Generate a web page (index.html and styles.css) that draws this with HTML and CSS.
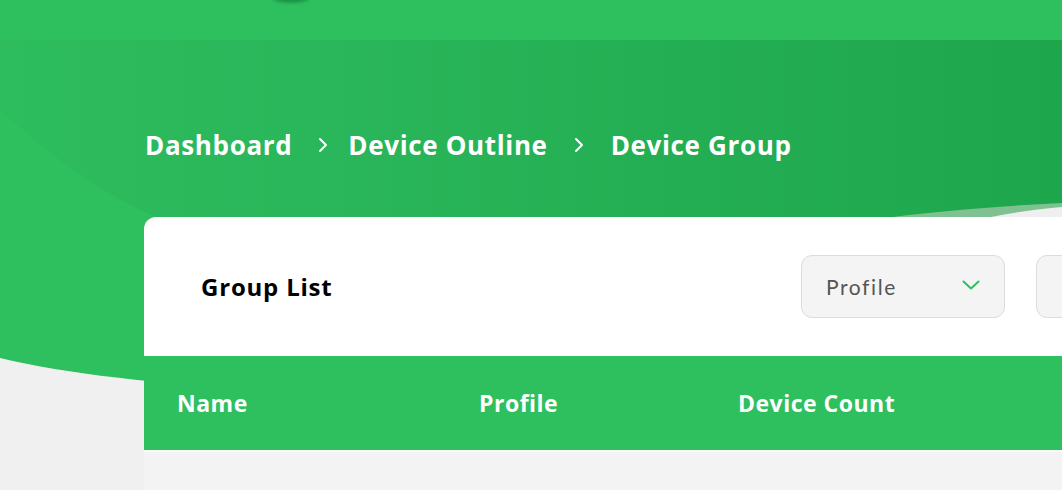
FILE: index.html
```html
<!DOCTYPE html>
<html lang="en">
<head>
<meta charset="utf-8">
<title>Device Group</title>
<link rel="stylesheet" href="styles.css">
</head>
<body>
<svg class="bg" width="1062" height="490" viewBox="0 0 1062 490" aria-hidden="true">
  <defs>
    <linearGradient id="heroGrad" x1="0" y1="0" x2="1" y2="0">
      <stop offset="0" stop-color="#2dbc5e"/>
      <stop offset="0.3" stop-color="#2ab65a"/>
      <stop offset="1" stop-color="#1ea64c"/>
    </linearGradient>
  </defs>
  <path d="M0 0H1062V420L400 396C250 391 100 382 0 358Z" fill="#2ebf5f"/>
  <rect x="880" y="195" width="182" height="40" fill="#80c192"/>
  <path d="M987 218C1015 212 1040 209 1062 207V235H987Z" fill="#efefef"/>
  <path d="M0 40H1062V203C1000 206 940 211 893 217L200 232C130 215 60 165 0 110Z" fill="url(#heroGrad)"/>
</svg>
<div class="page">
  <header class="topbar"><span class="blob"></span></header>
  <section class="hero">
    <nav class="crumbs">
      <span class="crumb">Dashboard</span>
      <svg class="sep" width="10" height="16" viewBox="0 0 10 16"><path d="M2 2L8 8L2 14" fill="none" stroke="#fff" stroke-width="2" stroke-linecap="round" stroke-linejoin="round"/></svg>
      <span class="crumb">Device Outline</span>
      <svg class="sep sep2" width="10" height="16" viewBox="0 0 10 16"><path d="M2 2L8 8L2 14" fill="none" stroke="#fff" stroke-width="2" stroke-linecap="round" stroke-linejoin="round"/></svg>
      <span class="crumb">Device Group</span>
    </nav>
  </section>
  <main class="card">
    <div class="card-head">
      <h1 class="title">Group List</h1>
      <div class="filters">
        <div class="select">
          <span class="select-label">Profile</span>
          <svg class="chev" width="18" height="10" viewBox="0 0 18 10"><path d="M1.5 1.5L9 8.5L16.5 1.5" fill="none" stroke="#2ebf5f" stroke-width="2" stroke-linecap="round" stroke-linejoin="round"/></svg>
        </div>
        <div class="select">
          <span class="select-label">Profile</span>
          <svg class="chev" width="18" height="10" viewBox="0 0 18 10"><path d="M1.5 1.5L9 8.5L16.5 1.5" fill="none" stroke="#2ebf5f" stroke-width="2" stroke-linecap="round" stroke-linejoin="round"/></svg>
        </div>
      </div>
    </div>
    <div class="thead">
      <div>Name</div>
      <div>Profile</div>
      <div>Device Count</div>
    </div>
    <div class="row"></div>
  </main>
</div>
</body>
</html>
```

FILE: styles.css
```css
html, body {
  margin: 0;
  padding: 0;
}
body {
  width: 1062px;
  height: 490px;
  overflow: hidden;
  position: relative;
  background: #f0f0f0;
  font-family: "Open Sans", "Noto Sans", sans-serif;
}
.bg {
  position: absolute;
  left: 0;
  top: 0;
  z-index: 0;
}
.page {
  position: relative;
  z-index: 1;
}
.topbar {
  height: 40px;
  position: relative;
}
.blob {
  position: absolute;
  left: 272px;
  top: -9px;
  width: 38px;
  height: 12px;
  border-radius: 50%;
  background: #1b9444;
  filter: blur(1.5px);
}
.hero {
  padding: 87px 0 0 145px;
}
.crumbs {
  display: flex;
  align-items: center;
  height: 36px;
  color: #fff;
  font-weight: 700;
  font-size: 26px;
  letter-spacing: 0.65px;
}
.sep {
  margin: 0 20px 0 26px;
}
.sep2 {
  margin: 0 27px 0 26px;
}
.card {
  margin: 54px 0 0 144px;
  width: 1200px;
  background: #fff;
  border-radius: 12px 0 0 0;
  overflow: hidden;
}
.card-head {
  height: 139px;
  display: flex;
  align-items: center;
  padding-left: 57px;
}
.title {
  flex: 0 0 600px;
  margin: 0;
  font-size: 24px;
  font-weight: 700;
  color: #000;
  letter-spacing: 0.8px;
}
.filters {
  display: flex;
  flex: 0 0 auto;
  gap: 31px;
}
.select {
  box-sizing: border-box;
  width: 204px;
  height: 63px;
  border: 1px solid #dcdcdc;
  border-radius: 11px;
  background: #f5f4f4;
  display: flex;
  align-items: center;
  justify-content: space-between;
  padding: 0 24px 0 24px;
}
.select-label {
  font-family: "Lato", "Inter", sans-serif;
  font-size: 21px;
  color: #555;
  letter-spacing: 1.6px;
}
.chev {
  margin-top: -3px;
}
.thead {
  display: grid;
  grid-template-columns: 302px 259px 1fr;
  align-items: center;
  height: 94px;
  padding-left: 33px;
  background: #2ebf5f;
  color: #fff;
  font-weight: 700;
  font-size: 23px;
  letter-spacing: 0.5px;
}
.row {
  height: 40px;
  border-top: 2px solid #fbfbfb;
  background: #f3f3f3;
}
```
